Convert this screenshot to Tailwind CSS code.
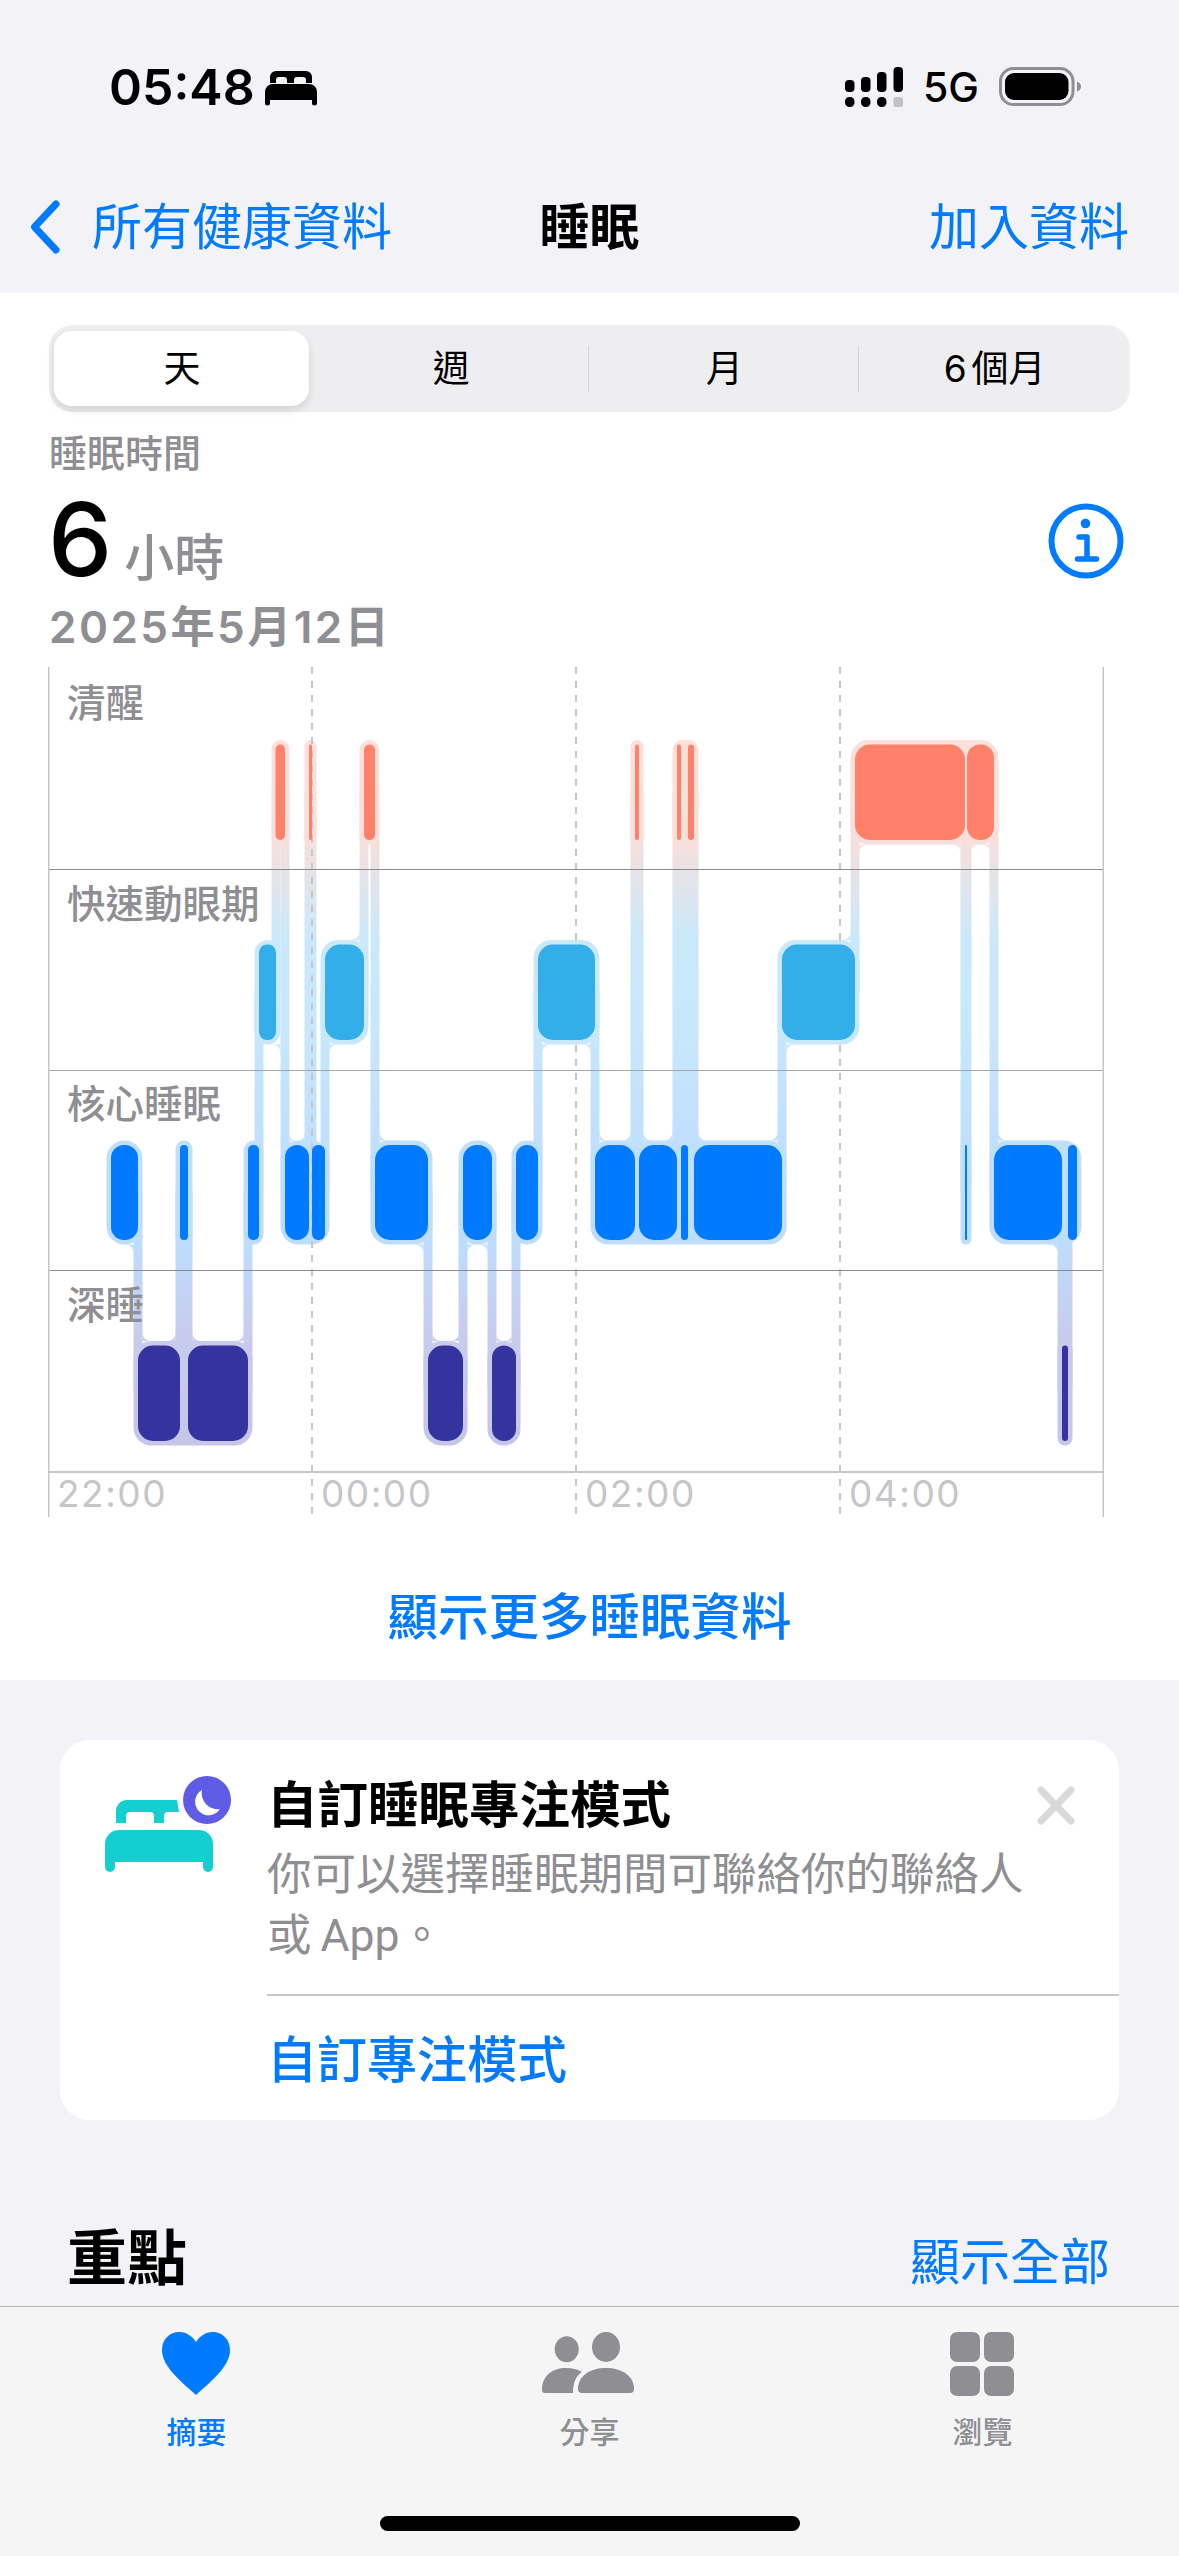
<!doctype html>
<html lang="zh-Hant">
<head>
<meta charset="utf-8">
<script src="https://cdn.jsdelivr.net/npm/@tailwindcss/browser@4"></script>
</head>
<body class="w-[1179px] h-[2556px] overflow-hidden bg-[#f2f2f7] text-black font-['Inter','Noto_Sans_CJK_TC',sans-serif]">

<header class="h-[293px]">
  <div class="h-[174px] flex items-center justify-between pl-[109px] pr-[98px]">
    <div class="flex items-center gap-[18px]">
      <span class="text-[50px] leading-[60px] font-semibold">05:48</span>
      <svg class="w-[80px] h-[55px] -ml-[24px] -mr-[14px]" viewBox="0 0 80 55"><path d="M16 32a8 8 0 0 1 8-8h36a8 8 0 0 1 8 8v11a2.5 2.5 0 0 1-5 0v-3H21v3a2.5 2.5 0 0 1-5 0z"/><path d="M21 23V17a6 6 0 0 1 6-6h30a6 6 0 0 1 6 6v6h-6v-3q0-3-3-3h-6q-3 0-3 3v3h-7v-3q0-3-3-3h-5q-3 0-3 3v3z"/></svg>
    </div>
    <div class="flex items-center">
      <svg class="w-[58px] h-[40px]" viewBox="846 67 58 40">
        <rect x="846" y="80" width="9.5" height="12" rx="4"/><rect x="862" y="77" width="9.5" height="15" rx="4"/><rect x="878" y="72" width="9.5" height="20" rx="4"/><rect x="894.5" y="67" width="9.5" height="25" rx="4"/>
        <rect x="846" y="97" width="9.5" height="10" rx="4.5"/><rect x="862" y="97" width="9.5" height="10" rx="4.5"/><rect x="878" y="97" width="9.5" height="10" rx="4.5"/><rect x="894.5" y="97" width="9.5" height="10" rx="2.5" fill="#c2c2c6"/>
      </svg>
      <span class="ml-[20px] text-[41px] leading-[48px] font-medium w-[54px] whitespace-nowrap">5G</span>
      <svg class="ml-[21px] w-[83px] h-[40px]" viewBox="998 68 83 40">
        <rect x="1000.5" y="69.5" width="72.5" height="36" rx="13" fill="none" stroke="#8e8e93" stroke-width="3"/>
        <rect x="1005" y="74" width="63.5" height="27" rx="9"/>
        <path d="M1077 82.5q4 1.500 4 5t-4 5z" fill="#8e8e93"/>
      </svg>
    </div>
  </div>
  <nav class="h-[106px] grid grid-cols-[1fr_auto_1fr] items-center pl-[28px] pr-[50px] text-[#007aff] text-[50px] leading-[60px]">
    <div class="flex items-center">
      <svg class="w-[34px] h-[56px]" viewBox="27 199 34 56" fill="none" stroke="#007aff" stroke-width="7" stroke-linecap="round" stroke-linejoin="round"><path d="M55 204 33.500 227 55 250"/></svg>
      <span class="ml-[30px] whitespace-nowrap">所有健康資料</span>
    </div>
    <div class="ml-[22px] text-black font-bold">睡眠</div>
    <div class="text-right whitespace-nowrap">加入資料</div>
  </nav>
</header>

<main class="h-[1387px] bg-white pt-[32px]">
  <div class="relative ml-[49px] w-[1081px] h-[87px] rounded-[24px] bg-[#eeeef0] flex items-center text-[37px] leading-[46px]">
    <div class="absolute left-[5px] top-[6px] w-[255px] h-[75px] rounded-[18px] bg-white shadow-[0_4px_8px_rgba(0,0,0,0.12)]"></div>
    <div class="relative w-[266px] text-center">天</div>
    <div class="w-[273px] text-center">週</div>
    <div class="w-[1.5px] h-[46px] bg-[#d4d4d8]"></div>
    <div class="w-[269px] text-center pl-[2px]">月</div>
    <div class="w-[1.5px] h-[46px] bg-[#d4d4d8]"></div>
    <div class="w-[271px] text-center whitespace-nowrap">6<span class="ml-[5px]">個月</span></div>
  </div>

  <div class="mt-[20px] ml-[49px] h-[42px] text-[38px] leading-[42px] font-medium text-[#8e8e93]">睡眠時間</div>
  <div class="ml-[48px] mr-[55px] h-[130px] flex items-baseline justify-between">
    <div class="flex items-baseline">
      <span class="text-[102px] leading-[130px] font-medium">6</span>
      <span class="ml-[12px] text-[50px] font-medium text-[#8e8e93]">小時</span>
    </div>
    <svg class="self-center mt-[4px] w-[76px] h-[76px]" viewBox="8.500 8.500 76 76" fill="none" stroke="#007aff" stroke-linecap="round" stroke-linejoin="round">
      <circle cx="46.500" cy="46.500" r="34.500" stroke-width="6"/>
      <circle cx="46" cy="29" r="4.800" fill="#007aff" stroke="none"/>
      <path d="M39.500 42.500h8V64M38 64.500h19" stroke-width="5.500"/>
    </svg>
  </div>
  <div class="ml-[49px] mt-[1px] -mb-[1px] h-[44px] text-[44px] leading-[44px] font-semibold text-[#8e8e93] tracking-[2.500px] whitespace-nowrap">2025年5月12日</div>

  <div class="relative mt-[19px] ml-[48px] w-[1056px] h-[850px]">
    <svg class="absolute inset-0 w-[1056px] h-[850px]" viewBox="48 667 1056 850">
      <defs>
        <linearGradient id="h" gradientUnits="userSpaceOnUse" x1="0" y1="740" x2="0" y2="1446">
          <stop offset="0" stop-color="#ffdfd9"/>
          <stop offset="0.145" stop-color="#f7dfdc"/>
          <stop offset="0.19" stop-color="#e6e3e8"/>
          <stop offset="0.285" stop-color="#c9e9fb"/>
          <stop offset="0.42" stop-color="#c7e7fb"/>
          <stop offset="0.58" stop-color="#bfdffe"/>
          <stop offset="0.715" stop-color="#bedcfb"/>
          <stop offset="0.852" stop-color="#c8cbec"/>
          <stop offset="1" stop-color="#c6c5e8"/>
        </linearGradient>
      </defs>
      <g fill="url(#h)">
        <rect x="106.500" y="1140.500" width="36" height="104" rx="18"/>
        <rect x="175.500" y="1140.500" width="17" height="104" rx="8.500"/>
        <rect x="243.500" y="1140.500" width="20" height="104" rx="10"/>
        <rect x="280.500" y="1140.500" width="49" height="104" rx="18"/>
        <rect x="370.500" y="1140.500" width="62" height="104" rx="18"/>
        <rect x="458.500" y="1140.500" width="38" height="104" rx="18"/>
        <rect x="511.500" y="1140.500" width="31" height="104" rx="15"/>
        <rect x="590.500" y="1140.500" width="196" height="104" rx="18"/>
        <rect x="960.500" y="1140.500" width="11" height="104" rx="5.500"/>
        <rect x="989.500" y="1140.500" width="92" height="104" rx="18"/>
        <rect x="133.500" y="1341" width="119" height="104.500" rx="18"/>
        <rect x="423.500" y="1341" width="44" height="104.500" rx="18"/>
        <rect x="487.500" y="1341" width="33" height="104.500" rx="16"/>
        <rect x="1057.500" y="1341" width="15" height="104.500" rx="7.500"/>
        <rect x="254.500" y="940" width="26" height="104.500" rx="13"/>
        <rect x="320.500" y="940" width="48" height="104.500" rx="18"/>
        <rect x="533.500" y="940" width="66" height="104.500" rx="18"/>
        <rect x="777.500" y="940" width="82" height="104.500" rx="18"/>
        <rect x="271.500" y="740" width="18" height="104.500" rx="9"/>
        <rect x="304.500" y="740" width="12" height="104.500" rx="6"/>
        <rect x="359.500" y="740" width="20" height="104.500" rx="10"/>
        <rect x="630.500" y="740" width="13" height="104.500" rx="6.500"/>
        <rect x="672.500" y="740" width="26" height="104.500" rx="10"/>
        <rect x="850.500" y="740" width="148" height="104.500" rx="18"/>
        <rect x="133.500" y="1190" width="9" height="200"/>
        <rect x="175.500" y="1190" width="17" height="200"/>
        <rect x="243.500" y="1190" width="9" height="200"/>
        <rect x="254.500" y="990" width="9" height="200"/>
        <rect x="271.500" y="790" width="9" height="200"/>
        <rect x="280.500" y="790" width="9" height="400"/>
        <rect x="304.500" y="790" width="12" height="400"/>
        <rect x="320.500" y="990" width="9" height="200"/>
        <rect x="359.500" y="790" width="9" height="200"/>
        <rect x="370.500" y="790" width="9" height="400"/>
        <rect x="423.500" y="1190" width="9" height="200"/>
        <rect x="458.500" y="1190" width="9" height="200"/>
        <rect x="487.500" y="1190" width="9" height="200"/>
        <rect x="511.500" y="1190" width="9" height="200"/>
        <rect x="533.500" y="990" width="9" height="200"/>
        <rect x="590.500" y="990" width="9" height="200"/>
        <rect x="630.500" y="790" width="13" height="400"/>
        <rect x="672.500" y="790" width="26" height="400"/>
        <rect x="777.500" y="990" width="9" height="200"/>
        <rect x="850.500" y="790" width="9" height="200"/>
        <rect x="960.500" y="790" width="11" height="400"/>
        <rect x="989.500" y="790" width="9" height="400"/>
        <rect x="1057.500" y="1190" width="15" height="200"/>
        <path d="M133.500 1244.500h-9q9 0 9 9z"/>
        <path d="M142.500 1341h9q-9 0-9-9z"/>
        <path d="M175.500 1341h-9q9 0 9-9z"/>
        <path d="M192.500 1341h9q-9 0-9-9z"/>
        <path d="M243.500 1341h-9q9 0 9-9z"/>
        <path d="M280.500 1044.500h-9q9 0 9 9z"/>
        <path d="M359.500 940h-10q10 0 10-10z"/>
        <path d="M329.500 1044.500h9q-9 0-9 9z"/>
        <path d="M289.500 1140.500h7q-7 0-7-7z"/>
        <path d="M304.500 1140.500h-7q7 0 7-7z"/>
        <path d="M379.500 1140.500h9q-9 0-9-9z"/>
        <path d="M423.500 1244.500h-9q9 0 9 9z"/>
        <path d="M432.500 1341h9q-9 0-9-9z"/>
        <path d="M458.500 1341h-9q9 0 9-9z"/>
        <path d="M467.500 1244.500h9q-9 0-9 9z"/>
        <path d="M487.500 1244.500h-9q9 0 9 9z"/>
        <path d="M496.500 1341h7q-7 0-7-7z"/>
        <path d="M511.500 1341h-7q7 0 7-7z"/>
        <path d="M542.500 1044.500h9q-9 0-9 9z"/>
        <path d="M590.500 1044.500h-9q9 0 9 9z"/>
        <path d="M599.500 1140.500h9q-9 0-9-9z"/>
        <path d="M630.500 1140.500h-9q9 0 9-9z"/>
        <path d="M643.500 1140.500h9q-9 0-9-9z"/>
        <path d="M672.500 1140.500h-9q9 0 9-9z"/>
        <path d="M698.500 1140.500h9q-9 0-9-9z"/>
        <path d="M777.500 1140.500h-9q9 0 9-9z"/>
        <path d="M850.500 940h-9q9 0 9-9z"/>
        <path d="M786.500 1044.500h9q-9 0-9 9z"/>
        <path d="M859.500 844.500h9q-9 0-9 9z"/>
        <path d="M960.500 844.500h-9q9 0 9 9z"/>
        <path d="M971.500 844.500h8q-8 0-8 8z"/>
        <path d="M989.500 844.500h-8q8 0 8 8z"/>
        <path d="M998.500 1140.500h9q-9 0-9-9z"/>
        <path d="M1057.500 1244.500h-9q9 0 9 9z"/>
      </g>

      <g stroke="#c6c6c8" stroke-width="2" stroke-dasharray="7 7">
        <path d="M312 667V1517"/>
        <path d="M576 667V1517"/>
        <path d="M840 667V1517"/>
      </g>

      <g fill="#ff8169">
        <rect x="275.500" y="744.500" width="9.500" height="95.500" rx="4.700"/>
        <rect x="309" y="744.500" width="3" height="95.500" rx="1.500"/>
        <rect x="364" y="744.500" width="11" height="95.500" rx="5.500"/>
        <rect x="635" y="744.500" width="4" height="95.500" rx="2"/>
        <rect x="677" y="744.500" width="4" height="95.500" rx="2"/>
        <rect x="688" y="744.500" width="6" height="95.500" rx="3"/>
        <rect x="855" y="744.500" width="110" height="95.500" rx="15"/>
        <rect x="967" y="744.500" width="27" height="95.500" rx="13"/>
      </g>
      <g fill="#33aee8">
        <rect x="259" y="944.500" width="17" height="95.500" rx="8"/>
        <rect x="325" y="944.500" width="39" height="95.500" rx="15"/>
        <rect x="538" y="944.500" width="57" height="95.500" rx="15"/>
        <rect x="782" y="944.500" width="73" height="95.500" rx="15"/>
      </g>
      <g fill="#007aff">
        <rect x="111" y="1145" width="27" height="95" rx="13"/>
        <rect x="180" y="1145" width="8" height="95" rx="4"/>
        <rect x="248" y="1145" width="11" height="95" rx="5"/>
        <rect x="285" y="1145" width="24" height="95" rx="12"/>
        <rect x="312" y="1145" width="13" height="95" rx="6"/>
        <rect x="375" y="1145" width="53" height="95" rx="15"/>
        <rect x="463" y="1145" width="29" height="95" rx="14"/>
        <rect x="516" y="1145" width="22" height="95" rx="11"/>
        <rect x="595" y="1145" width="40" height="95" rx="15"/>
        <rect x="639" y="1145" width="38" height="95" rx="15"/>
        <rect x="681" y="1145" width="7" height="95" rx="3.500"/>
        <rect x="694" y="1145" width="88" height="95" rx="15"/>
        <rect x="965" y="1145" width="2" height="95" rx="1"/>
        <rect x="994" y="1145" width="68" height="95" rx="15"/>
        <rect x="1068" y="1145" width="9" height="95" rx="4.500"/>
      </g>
      <g fill="#35339f">
        <rect x="138" y="1345.500" width="42" height="95.500" rx="15"/>
        <rect x="188" y="1345.500" width="60" height="95.500" rx="15"/>
        <rect x="428" y="1345.500" width="35" height="95.500" rx="15"/>
        <rect x="492" y="1345.500" width="24" height="95.500" rx="12"/>
        <rect x="1062" y="1345.500" width="6" height="95.500" rx="3"/>
      </g>

      <rect x="48" y="869" width="1056" height="1" fill="#8a8a8e"/>
      <rect x="48" y="1070" width="1056" height="1" fill="#a6a6a9"/>
      <rect x="48" y="1270" width="1056" height="1" fill="#8a8a8e"/>
      <rect x="48" y="1471" width="1056" height="2" fill="#c6c6c8"/>
      <rect x="48" y="667" width="1.500" height="850" fill="#c6c6c8"/>
      <rect x="1102.500" y="667" width="1.500" height="850" fill="#c6c6c8"/>
    </svg>

    <div class="absolute left-[19px] top-[13px] text-[38.500px] leading-[46px] font-medium text-[#8e8e93]">
      <div class="h-[200.500px]">清醒</div>
      <div class="h-[200.500px]">快速動眼期</div>
      <div class="h-[200.500px]">核心睡眠</div>
      <div class="h-[200.500px]">深睡</div>
    </div>
    <div class="absolute left-[9px] top-[804px] grid grid-cols-[264px_264px_264px_264px] text-[37px] leading-[46px] tracking-[1.500px] text-[#c6c6c8]">
      <span>22:00</span><span>00:00</span><span>02:00</span><span>04:00</span>
    </div>
  </div>

  <div class="mt-[50px] h-[100px] flex items-center justify-center text-[50.500px] leading-[60px] font-medium text-[#007aff]">顯示更多睡眠資料</div>
</main>

<section class="relative mt-[60px] mx-[60px] h-[380px] rounded-[30px] bg-white flex">
  <div class="w-[207px] shrink-0">
    <svg class="ml-[30px] mt-[30px] w-[160px] h-[110px]" viewBox="0 0 160 110">
      <path fill="#14cfcf" d="M15 74a14 14 0 0 1 14-14h80a14 14 0 0 1 14 14v23a5 5 0 0 1-10 0v-5H25v5a5 5 0 0 1-10 0z"/>
      <path fill="#14cfcf" d="M26 53V41a11 11 0 0 1 11-11H87l2 12H78a4 4 0 0 0-4 4v7H64V46a4 4 0 0 0-4-4H40a4 4 0 0 0-4 4v7z"/>
      <circle cx="117" cy="30" r="24" fill="#5e5ce6"/>
      <path fill="#fff" d="M112 20A13.500 13.500 0 1 0 130 39A16 16 0 0 1 112 20Z"/>
    </svg>
  </div>
  <div class="flex-1 pt-[35px] flex flex-col">
    <div class="text-[50.500px] leading-[60px] font-semibold whitespace-nowrap">自訂睡眠專注模式</div>
    <div class="mt-[9px] text-[44.500px] leading-[61px] text-[#8e8e93] whitespace-nowrap">你可以選擇睡眠期間可聯絡你的聯絡人<br>或<span class="ml-[9px] font-['Roboto']">App</span>。</div>
    <div class="mt-[27px] h-[1.500px] bg-[#c6c6c8]"></div>
    <div class="flex-1 flex items-center pt-[4px] text-[50px] leading-[60px] font-medium text-[#007aff]">自訂專注模式</div>
  </div>
  <svg class="absolute left-[976px] top-[45px] w-[40px] h-[40px]" viewBox="0 0 40 40" fill="none" stroke="#d9d9db" stroke-width="7" stroke-linecap="round"><path d="M5 5 35 36M35 5 5 36"/></svg>
</section>

<div class="mt-[106px] h-[76px] pl-[67px] pr-[69px] flex justify-between items-start whitespace-nowrap">
  <span class="text-[60px] leading-[64px] font-bold">重點</span>
  <span class="mt-[4px] text-[50px] leading-[64px] text-[#007aff]">顯示全部</span>
</div>

<footer class="mt-[4px] h-[250px] border-t border-[#b4b4b6] bg-[#f5f5f6] flex flex-col">
  <div class="grid grid-cols-3 pt-[25px] text-[30px] leading-[36px] font-medium text-[#8e8e93] text-center">
    <div class="flex flex-col items-center text-[#007aff]">
      <svg class="w-[68px] h-[64px] -ml-[2px]" viewBox="0 0 68 64"><path fill="#007aff" d="M34 63C20 50 0 35 0 18C0 7 8 0 17 0C25 0 31 5 34 10C37 5 43 0 51 0C60 0 68 7 68 18C68 35 48 50 34 63Z"/></svg>
      <span class="mt-[18px]">摘要</span>
    </div>
    <div class="flex flex-col items-center">
      <svg class="w-[120px] h-[85px] -my-[12px] -mb-[9px]" viewBox="0 0 120 85" fill="#8e8e93">
        <ellipse cx="36.700" cy="29.300" rx="12" ry="13"/><ellipse cx="76" cy="27" rx="14" ry="15"/>
        <path d="M48 69C48 56 60 48 76 48C92 48 104 56 104 69Q104 73 100 73H52Q48 73 48 69Z"/>
        <path d="M12 70C12 56 22 48 36 48C42 48 47 49 52 52C46 56 43 62 43 73H15Q12 73 12 70Z"/>
      </svg>
      <span class="mt-[18px]">分享</span>
    </div>
    <div class="flex flex-col items-center">
      <div class="grid grid-cols-[30px_30px] grid-rows-[30px_30px] gap-[4px] h-[64px] w-[64px] -ml-[2px]">
        <div class="rounded-[7px] bg-[#8e8e93]"></div><div class="rounded-[7px] bg-[#8e8e93]"></div>
        <div class="rounded-[7px] bg-[#8e8e93]"></div><div class="rounded-[7px] bg-[#8e8e93]"></div>
      </div>
      <span class="mt-[18px]">瀏覽</span>
    </div>
  </div>
  <div class="mt-[66px] mx-auto w-[420px] h-[15px] rounded-full bg-black"></div>
</footer>
</body>
</html>
